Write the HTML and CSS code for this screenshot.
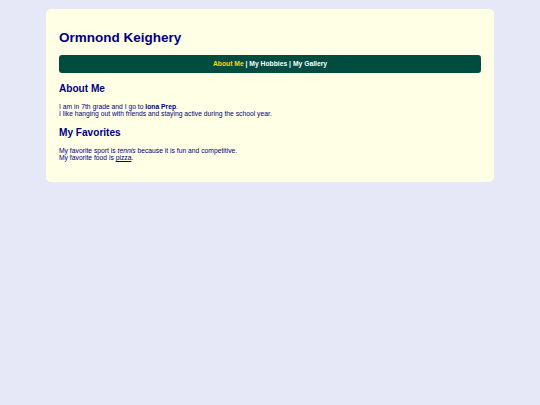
FILE: index.html
```html
<!DOCTYPE html>
<html lang="en">
<head>
<meta charset="utf-8">
<title>Ormnond Keighery</title>
<link rel="stylesheet" href="styles.css">
</head>
<body>
<div class="card">
  <h1 class="title">Ormnond Keighery</h1>
  <nav class="nav">
    <a class="nav-link active" href="#">About Me</a> | <a class="nav-link" href="#">My Hobbies</a> | <a class="nav-link" href="#">My Gallery</a>
  </nav>
  <h2 class="section-title">About Me</h2>
  <p class="text">I am in 7th grade and I go to <strong>Iona Prep</strong>.<br>I like hanging out with friends and staying active during the school year.</p>
  <h2 class="section-title">My Favorites</h2>
  <p class="text">My favorite sport is <em>tennis</em> because it is fun and competitive.<br>My favorite food is <a class="inline-link" href="#">pizza</a>.</p>
</div>
</body>
</html>
```

FILE: styles.css
```css
html, body {
  margin: 0;
  padding: 0;
}
body {
  background: #e6e8f8;
  font-family: "Liberation Sans", Arial, sans-serif;
  font-size: 6.75px;
  color: #000080;
  padding: 9px 0;
}
.card {
  width: 448px;
  box-sizing: border-box;
  margin: 0 auto;
  background: #ffffe6;
  border-radius: 5px;
  padding: 13.5px 13px 13.5px;
}
.title {
  font-size: 13.5px;
  margin: 7px 0 10px;
  color: #000080;
}
.nav {
  background: #004d40;
  border-radius: 3px;
  text-align: center;
  color: #ffffff;
  font-weight: bold;
  padding: 5.75px 0;
}
.nav-link {
  color: #ffffff;
  text-decoration: none;
}
.nav-link.active {
  color: #ffd700;
}
.section-title {
  font-size: 10.1px;
  margin: 9.5px 0 9px;
  color: #000080;
}
.text {
  margin: 6.75px 0;
  line-height: 1.1;
}
.inline-link {
  color: #000080;
}
```
